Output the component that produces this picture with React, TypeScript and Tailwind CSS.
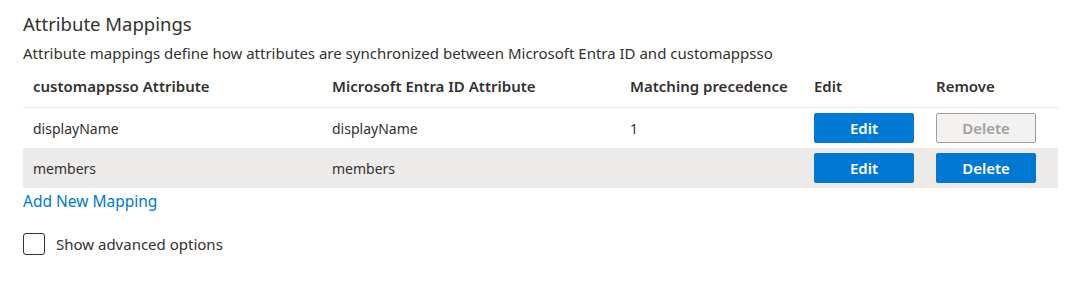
import React from "react";

interface Mapping {
  target: string;
  source: string;
  precedence: string;
  canDelete: boolean;
}

const mappings: Mapping[] = [
  { target: "displayName", source: "displayName", precedence: "1", canDelete: false },
  { target: "members", source: "members", precedence: "", canDelete: true },
];

const cols = "grid grid-cols-[299px_298px_184px_122px_132px]";

const App = () => {
  return (
    <div
      className="w-[1079px] h-[283px] bg-white pl-[23px] pt-[12px] text-[#323130]"
      style={{ fontFamily: '"Segoe UI", "Noto Sans", "Open Sans", sans-serif' }}
    >
      {/* Section heading */}
      <h2 className="text-[18.5px] leading-[24px] font-normal">Attribute Mappings</h2>
      <p className="mt-[7px] text-[15px] leading-[20px]">
        Attribute mappings define how attributes are synchronized between Microsoft Entra ID and customappsso
      </p>

      {/* Mapping table */}
      <div className="w-[1035px] mt-[3px] text-[14px]">
        <div className={`${cols} h-[42px] items-center text-[15px] font-semibold border-b border-[#edebe9]`}>
          <span className="px-[10px]">customappsso Attribute</span>
          <span className="px-[10px]">Microsoft Entra ID Attribute</span>
          <span className="px-[10px]">Matching precedence</span>
          <span className="px-[10px]">Edit</span>
          <span className="px-[10px]">Remove</span>
        </div>
        {mappings.map((m, i) => (
          <div
            key={m.target}
            className={`${cols} h-[40px] items-center ${i % 2 === 1 ? "bg-[#edebe9]" : "bg-white"}`}
          >
            <span className="px-[10px]">{m.target}</span>
            <span className="px-[10px]">{m.source}</span>
            <span className="px-[10px]">{m.precedence}</span>
            <div className="px-[10px]">
              <button className="w-[100px] h-[30px] rounded-[2px] bg-[#0078d4] text-white text-[15px] font-semibold">
                Edit
              </button>
            </div>
            <div className="px-[10px]">
              {m.canDelete ? (
                <button className="w-[100px] h-[30px] rounded-[2px] bg-[#0078d4] text-white text-[15px] font-semibold">
                  Delete
                </button>
              ) : (
                <button
                  disabled
                  className="w-[100px] h-[30px] rounded-[2px] bg-[#f3f2f1] border border-[#a19f9d] text-[#a19f9d] text-[15px] font-semibold"
                >
                  Delete
                </button>
              )}
            </div>
          </div>
        ))}
      </div>

      <a className="block mt-[3px] text-[15.5px] leading-[20px] text-[#0078d4] cursor-pointer">
        Add New Mapping
      </a>

      <label className="mt-[22px] flex items-center gap-[11px] text-[15px]">
        <span className="w-[22px] h-[22px] rounded-[3px] border border-[#323130] bg-white" />
        Show advanced options
      </label>
    </div>
  );
};

export default App;
